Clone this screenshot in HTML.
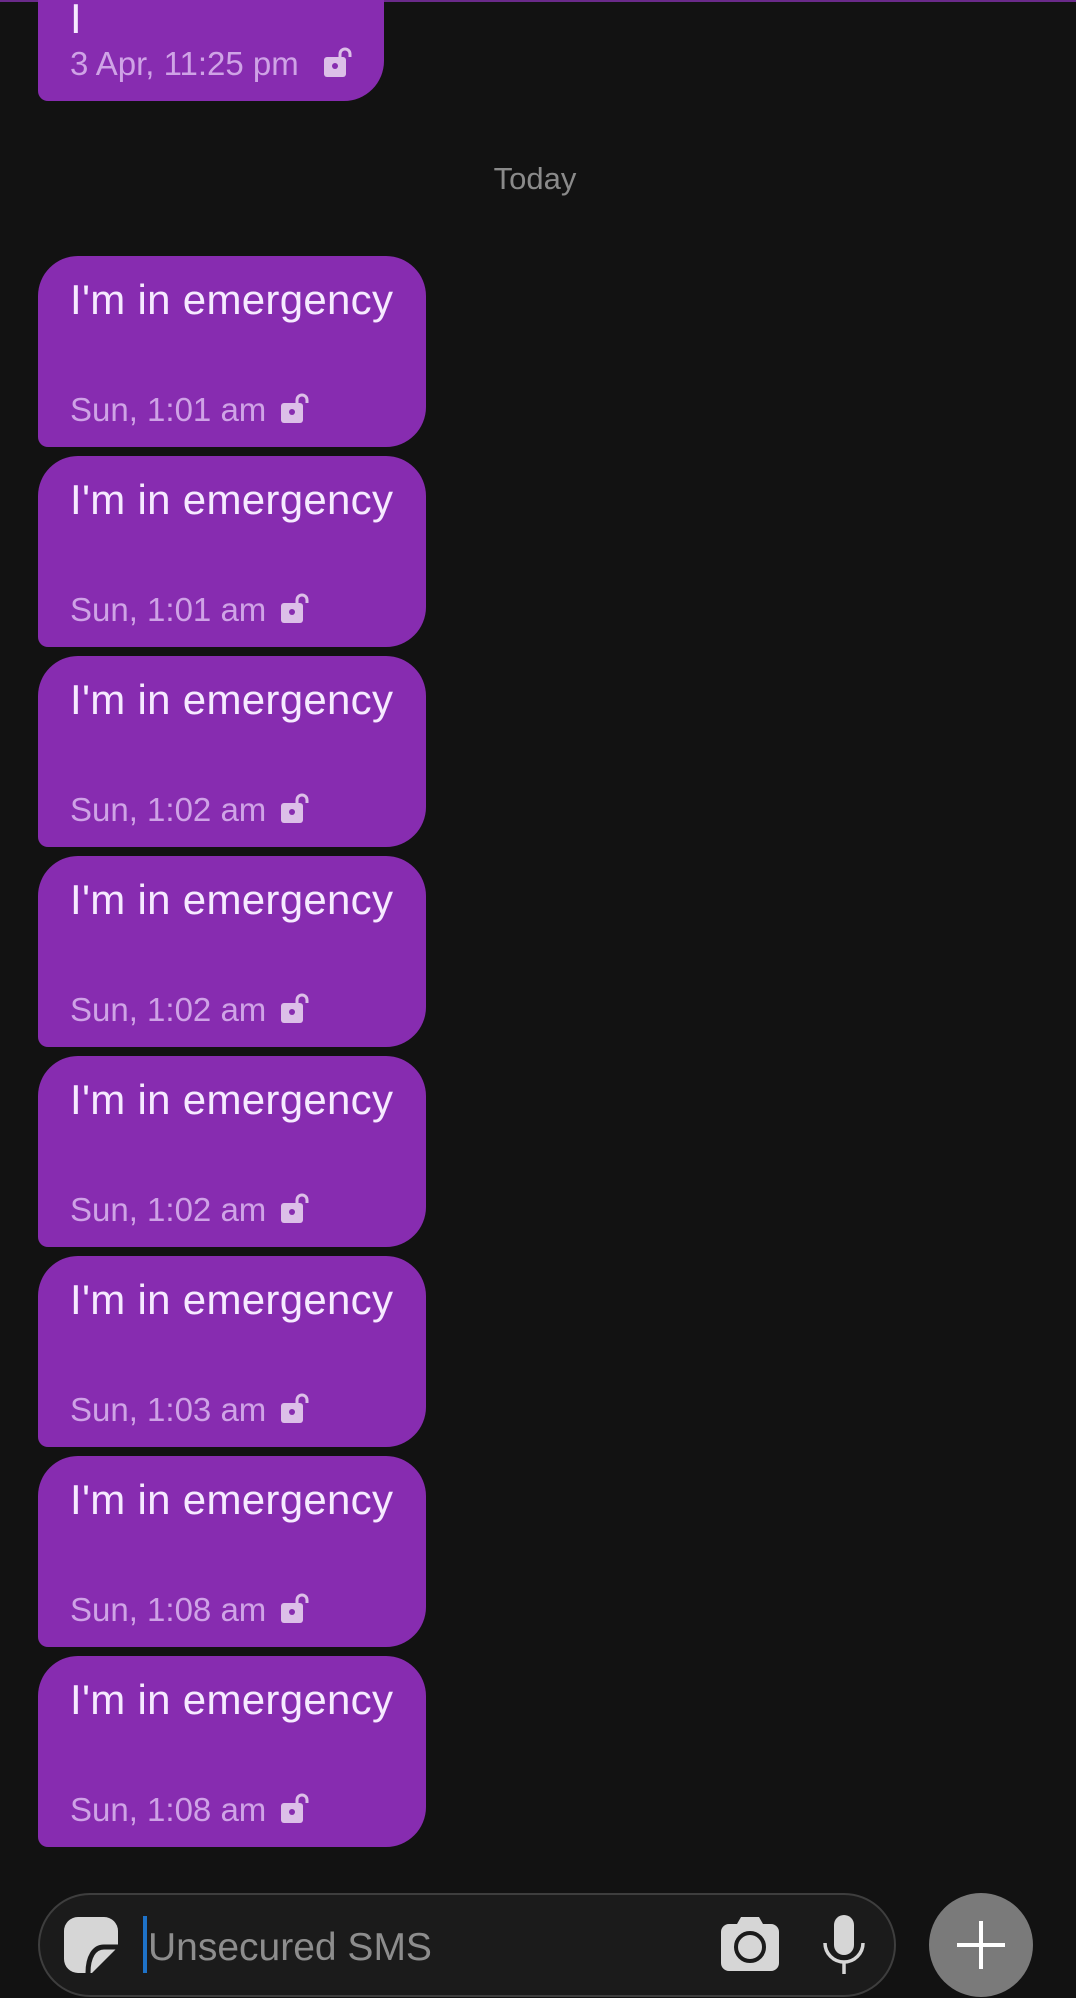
<!DOCTYPE html>
<html><head><meta charset="utf-8"><style>
*{margin:0;padding:0;box-sizing:border-box}
html,body{width:1076px;height:1998px;background:#121212;overflow:hidden;font-family:"Liberation Sans",sans-serif;position:relative}
.topline{position:absolute;left:0;top:0;width:1076px;height:2px;background:#6a2a8a}
.b{position:absolute;left:38px;width:388px;height:191px;background:#872cb0;border-radius:40px 40px 40px 10px}
.t{position:absolute;left:32px;top:23px;font-size:42px;line-height:1;color:#f6eaff;white-space:nowrap;letter-spacing:0.3px}
.s{position:absolute;left:32px;top:137px;font-size:33px;line-height:1;color:#cfa3e6;white-space:nowrap}
.l{position:absolute;left:243px;top:136px}
.today{position:absolute;left:0;width:1070px;text-align:center;top:163px;font-size:31px;line-height:1;color:#8a8a8a}
.pill{position:absolute;left:38px;top:1893px;width:858px;height:104px;border:2px solid #3e3e3e;border-radius:52px;background:#1b1b1b}
.ph{position:absolute;left:148px;top:1928px;font-size:39px;line-height:1;color:#8d8d8d}
.cur{position:absolute;left:143px;top:1916px;width:4px;height:57px;background:#1e72c8}
.fab{position:absolute;left:929px;top:1893px;width:104px;height:104px;border-radius:52px;background:#7a7a7a}
</style></head><body>
<div class="topline"></div>

<div class="b" style="top:-90px;width:346px">
  <div class="t" style="top:88px">I</div>
  <div class="s">3 Apr, 11:25 pm</div>
  <svg class="l" style="left:286px" width="30" height="32" viewBox="0 0 30 32"><path d="M16 12 V8 a5 5 0 0 1 10 0 V11" fill="none" stroke="#dcbfe8" stroke-width="3"/><rect x="0" y="11" width="22" height="20" rx="3" fill="#dcbfe8"/><circle cx="11" cy="20" r="3" fill="#872cb0"/></svg>
</div>

<div class="today">Today</div>

<div class="b" style="top:256px"><div class="t">I'm in emergency</div><div class="s">Sun, 1:01 am</div><svg class="l" width="30" height="32" viewBox="0 0 30 32"><path d="M16 12 V8 a5 5 0 0 1 10 0 V11" fill="none" stroke="#dcbfe8" stroke-width="3"/><rect x="0" y="11" width="22" height="20" rx="3" fill="#dcbfe8"/><circle cx="11" cy="20" r="3" fill="#872cb0"/></svg></div>
<div class="b" style="top:456px"><div class="t">I'm in emergency</div><div class="s">Sun, 1:01 am</div><svg class="l" width="30" height="32" viewBox="0 0 30 32"><path d="M16 12 V8 a5 5 0 0 1 10 0 V11" fill="none" stroke="#dcbfe8" stroke-width="3"/><rect x="0" y="11" width="22" height="20" rx="3" fill="#dcbfe8"/><circle cx="11" cy="20" r="3" fill="#872cb0"/></svg></div>
<div class="b" style="top:656px"><div class="t">I'm in emergency</div><div class="s">Sun, 1:02 am</div><svg class="l" width="30" height="32" viewBox="0 0 30 32"><path d="M16 12 V8 a5 5 0 0 1 10 0 V11" fill="none" stroke="#dcbfe8" stroke-width="3"/><rect x="0" y="11" width="22" height="20" rx="3" fill="#dcbfe8"/><circle cx="11" cy="20" r="3" fill="#872cb0"/></svg></div>
<div class="b" style="top:856px"><div class="t">I'm in emergency</div><div class="s">Sun, 1:02 am</div><svg class="l" width="30" height="32" viewBox="0 0 30 32"><path d="M16 12 V8 a5 5 0 0 1 10 0 V11" fill="none" stroke="#dcbfe8" stroke-width="3"/><rect x="0" y="11" width="22" height="20" rx="3" fill="#dcbfe8"/><circle cx="11" cy="20" r="3" fill="#872cb0"/></svg></div>
<div class="b" style="top:1056px"><div class="t">I'm in emergency</div><div class="s">Sun, 1:02 am</div><svg class="l" width="30" height="32" viewBox="0 0 30 32"><path d="M16 12 V8 a5 5 0 0 1 10 0 V11" fill="none" stroke="#dcbfe8" stroke-width="3"/><rect x="0" y="11" width="22" height="20" rx="3" fill="#dcbfe8"/><circle cx="11" cy="20" r="3" fill="#872cb0"/></svg></div>
<div class="b" style="top:1256px"><div class="t">I'm in emergency</div><div class="s">Sun, 1:03 am</div><svg class="l" width="30" height="32" viewBox="0 0 30 32"><path d="M16 12 V8 a5 5 0 0 1 10 0 V11" fill="none" stroke="#dcbfe8" stroke-width="3"/><rect x="0" y="11" width="22" height="20" rx="3" fill="#dcbfe8"/><circle cx="11" cy="20" r="3" fill="#872cb0"/></svg></div>
<div class="b" style="top:1456px"><div class="t">I'm in emergency</div><div class="s">Sun, 1:08 am</div><svg class="l" width="30" height="32" viewBox="0 0 30 32"><path d="M16 12 V8 a5 5 0 0 1 10 0 V11" fill="none" stroke="#dcbfe8" stroke-width="3"/><rect x="0" y="11" width="22" height="20" rx="3" fill="#dcbfe8"/><circle cx="11" cy="20" r="3" fill="#872cb0"/></svg></div>
<div class="b" style="top:1656px"><div class="t">I'm in emergency</div><div class="s">Sun, 1:08 am</div><svg class="l" width="30" height="32" viewBox="0 0 30 32"><path d="M16 12 V8 a5 5 0 0 1 10 0 V11" fill="none" stroke="#dcbfe8" stroke-width="3"/><rect x="0" y="11" width="22" height="20" rx="3" fill="#dcbfe8"/><circle cx="11" cy="20" r="3" fill="#872cb0"/></svg></div>

<div class="pill"></div>
<svg style="position:absolute;left:64px;top:1917px" width="54" height="56" viewBox="0 0 54 56">
  <path d="M14 0 H40 A14 14 0 0 1 54 14 V30 L28 56 H14 A14 14 0 0 1 0 42 V14 A14 14 0 0 1 14 0Z" fill="#d6d6d6"/>
  <path d="M54 30 H40 C30 30 24 40 24 56" fill="none" stroke="#1b1b1b" stroke-width="5"/>
</svg>
<div class="cur"></div>
<div class="ph">Unsecured SMS</div>
<svg style="position:absolute;left:721px;top:1917px" width="58" height="54" viewBox="0 0 58 54">
  <path d="M20 0 H38 L42 7 H50 A8 8 0 0 1 58 15 V46 A8 8 0 0 1 50 54 H8 A8 8 0 0 1 0 46 V15 A8 8 0 0 1 8 7 H16Z" fill="#d6d6d6"/>
  <circle cx="29" cy="30" r="14" fill="none" stroke="#1b1b1b" stroke-width="4"/>
</svg>
<svg style="position:absolute;left:822px;top:1915px" width="44" height="60" viewBox="0 0 44 60">
  <rect x="12" y="0" width="20" height="40" rx="10" fill="#d6d6d6"/>
  <path d="M3 28 A19 19 0 0 0 41 28" fill="none" stroke="#d6d6d6" stroke-width="3.5"/>
  <line x1="22" y1="47" x2="22" y2="59" stroke="#d6d6d6" stroke-width="3.5"/>
</svg>
<div class="fab"></div>
<svg style="position:absolute;left:929px;top:1893px" width="104" height="104" viewBox="0 0 104 104">
  <line x1="52" y1="28" x2="52" y2="76" stroke="#fff" stroke-width="4"/>
  <line x1="28" y1="52" x2="76" y2="52" stroke="#fff" stroke-width="4"/>
</svg>
</body></html>
